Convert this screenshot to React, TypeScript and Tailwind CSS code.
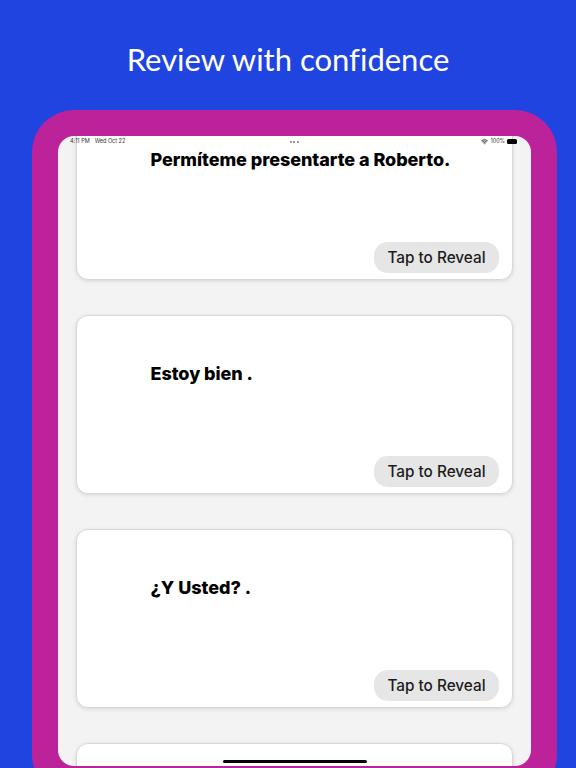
import { Wifi } from 'lucide-react';

type CardProps = {
  text: string;
  hasButton?: boolean;
};

function Card({ text, hasButton = true }: CardProps) {
  return (
    <div className="h-[179px] shrink-0 rounded-[12px] border border-[#d8d8d8] bg-white shadow-[0_1px_4px_rgba(0,0,0,0.12)] flex flex-col">
      <div className="pl-[73.5px] pt-[47px] h-[140px] text-[18px] leading-[22px] font-extrabold text-black tracking-[-0.05px]">
        {text}
      </div>
      {hasButton && (
        <div className="flex justify-end pr-[13px]">
          <button className="h-[31px] w-[125px] pt-[1px] rounded-[14px] bg-[#e6e6e6] text-[15.3px] font-[550] text-[#1c1c1c]">
            Tap to Reveal
          </button>
        </div>
      )}
    </div>
  );
}

export default function App() {
  return (
    <div
      className="w-[576px] h-[768px] overflow-hidden bg-[#2044e0]"
      style={{ fontFamily: 'Inter, "Liberation Sans", sans-serif' }}
    >
      <div className="h-[110px] pt-[40px] text-center">
        <h1
          className="text-[31px] leading-[38px] font-normal text-white [font-variant-ligatures:none]"
          style={{ fontFamily: 'Lato, sans-serif' }}
        >
          Review with confidence
        </h1>
      </div>
      <div className="ml-[32px] w-[525px] h-[687px] rounded-[42px] bg-[#bc2299] pt-[26px] pl-[26px]">
        <div className="relative w-[473px] h-[630px] overflow-hidden rounded-[16px] bg-[#f3f3f3]">
          <div className="absolute top-0 left-0 right-0 h-[11px] z-10 grid grid-cols-3 items-center pl-[12px] pr-[14px] text-[5.5px] text-[#333]">
            <div className="flex gap-[5px]">
              <span>4:11 PM</span>
              <span>Wed Oct 22</span>
            </div>
            <div className="flex justify-center gap-[1.5px] pl-[1px]">
              <span className="w-[2px] h-[2px] rounded-full bg-[#777]" />
              <span className="w-[2px] h-[2px] rounded-full bg-[#777]" />
              <span className="w-[2px] h-[2px] rounded-full bg-[#777]" />
            </div>
            <div className="flex items-center justify-end gap-[2px]">
              <Wifi className="w-[7px] h-[7px]" strokeWidth={3} />
              <span>100%</span>
              <span className="w-[10px] h-[5px] rounded-[1.5px] bg-black" />
            </div>
          </div>
          <div className="mt-[-35px] px-[18px] flex flex-col gap-[35px]">
            <Card text="Permíteme presentarte a Roberto." />
            <Card text="Estoy bien ." />
            <Card text="¿Y Usted? ." />
            <Card text="" hasButton={false} />
          </div>
          <div className="absolute left-[164.5px] bottom-[3px] w-[144px] h-[3px] rounded-full bg-black" />
        </div>
      </div>
    </div>
  );
}
